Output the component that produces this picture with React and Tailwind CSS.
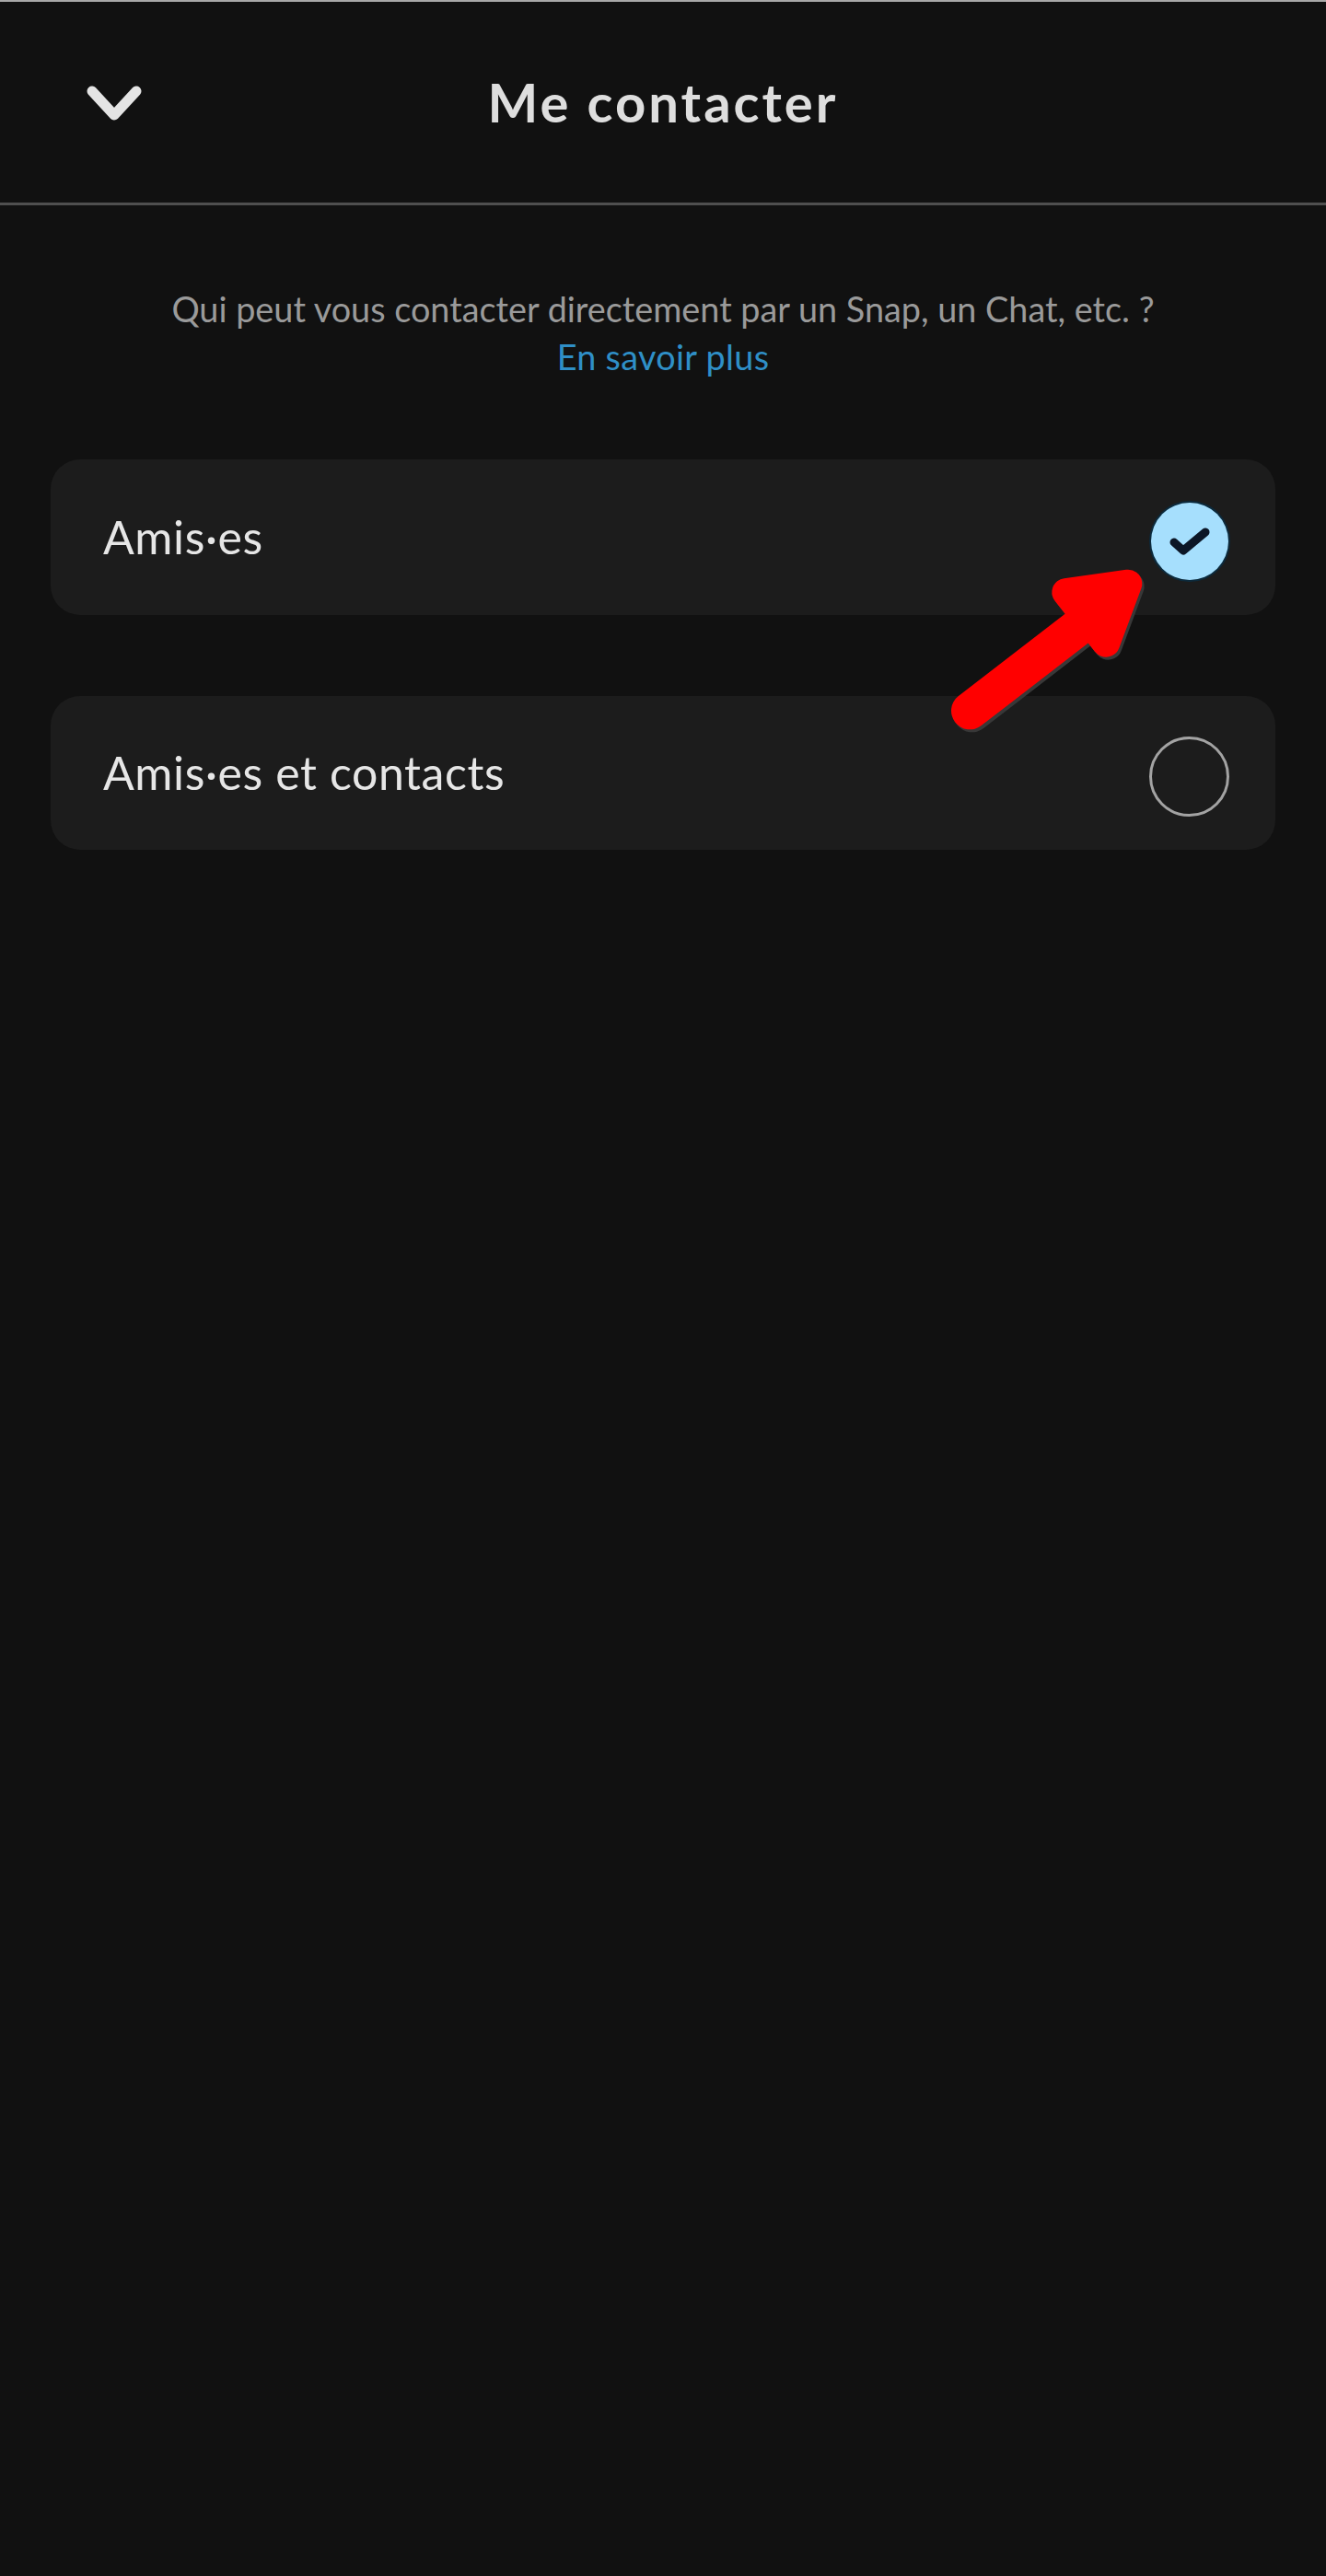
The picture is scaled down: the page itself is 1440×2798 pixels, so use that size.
const FONT = "font-['Lato','Noto_Sans',sans-serif]"

function Chevron() {
  return (
    <svg width="60" height="40" viewBox="0 0 60 40" fill="none" className="block">
      <path d="M6 6 L30 32 L54 6" stroke="#e4e4e4" strokeWidth="11" strokeLinecap="round" strokeLinejoin="round" />
    </svg>
  )
}

function Check() {
  return (
    <svg width="48" height="36" viewBox="0 0 48 36" fill="none" className="block">
      <path d="M7 19 L17 28 L41 8" stroke="#0c1626" strokeWidth="9" strokeLinecap="round" strokeLinejoin="round" />
    </svg>
  )
}

function ArrowShape({ color }) {
  return (
    <g fill={color} stroke={color} strokeLinecap="round" strokeLinejoin="round">
      <path d="M160 876 L510 606" strokeWidth="122" fill="none" />
      <path d="M473 490 L675 462 L603 655 Z" strokeWidth="92" />
    </g>
  )
}

export default function App() {
  return (
    <div className={`relative min-h-[2798px] bg-[#111111] ${FONT}`}>
      <header className="grid h-[223px] grid-cols-[1fr_auto_1fr] items-center border-t-2 border-b-[3px] border-t-[#a8a8a8] border-b-[#4f4f4f]">
        <div className="pl-[94px] pt-[4px]">
          <Chevron />
        </div>
        <h1 className="text-[58px] leading-[68px] font-bold tracking-[3px] text-[#dedede]">Me contacter</h1>
        <div />
      </header>

      <div className="pt-[87px] text-center text-[37.8px] leading-[52px]">
        <p className="text-[#9a9a9a]">Qui peut vous contacter directement par un Snap, un Chat, etc. ?</p>
        <p className="tracking-[0.3px] text-[#2f8fc7]">En savoir plus</p>
      </div>

      <div className="mx-[55px] mt-[85px] flex flex-col gap-[88px]">
        <div className="flex h-[169px] items-center justify-between rounded-[32px] bg-[#1c1c1c] pl-[57px] pr-[51px]">
          <span className="text-[50px] tracking-[0.6px] text-[#e6e6e6]">Amis·es</span>
          <span className="mt-[8px] flex h-[84px] w-[84px] items-center justify-center rounded-full bg-[#a6dffd] shadow-[0_0_0_2px_#0c2a3c]">
            <Check />
          </span>
        </div>
        <div className="flex h-[167px] items-center justify-between rounded-[32px] bg-[#1c1c1c] pl-[57px] pr-[50px]">
          <span className="text-[50px] tracking-[0.6px] text-[#e6e6e6]">Amis·es et contacts</span>
          <span className="mt-[8px] h-[87px] w-[87px] rounded-full border-[3px] border-[#a3a3a3]" />
        </div>
      </div>

      <svg width="440" height="460" viewBox="0 0 1320 1380" className="absolute left-[1000px] top-[480px]">
        <g transform="translate(7 9)">
          <ArrowShape color="#383838" />
        </g>
        <ArrowShape color="#ff0000" />
      </svg>
    </div>
  )
}
